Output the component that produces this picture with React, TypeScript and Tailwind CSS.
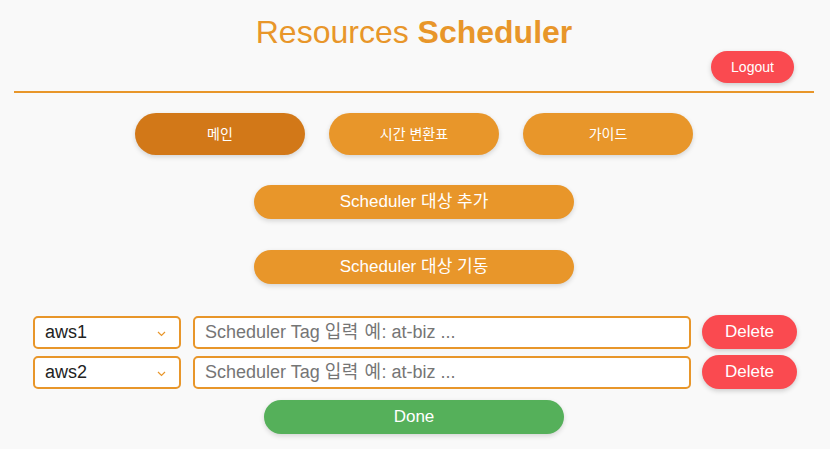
const sans = "font-['Liberation_Sans','Noto_Sans_CJK_KR',sans-serif]";

function Row({ value }: { value: string }) {
  return (
    <div className="ml-[2px] flex items-center">
      <div className="relative w-[148px] h-[33px] rounded-[5px] border-2 border-[#e8962a] bg-white flex items-center pl-[10px]">
        <span className="text-[18px] text-[#222]">{value}</span>
        <svg
          className="absolute right-[13px] top-[13px]"
          width="9"
          height="6"
          viewBox="0 0 9 6"
          fill="none"
        >
          <path d="M1 1l3.5 3.5L8 1" stroke="#e8962a" strokeWidth="1.2" />
        </svg>
      </div>
      <div className="ml-[12px] w-[498px] h-[33px] rounded-[5px] border-2 border-[#e8962a] bg-white flex items-center pl-[10px]">
        <span className="text-[18px] text-[#757575]">
          Scheduler Tag <span className="tracking-[0.5px]">입력 예</span>: at-biz ...
        </span>
      </div>
      <button className="ml-[11px] w-[95px] h-[34px] rounded-full bg-[#fa4a50] text-white text-[17px] shadow-[0_2px_5px_rgba(0,0,0,0.18)]">
        Delete
      </button>
    </div>
  );
}

export default function App() {
  return (
    <div className={`min-h-[449px] bg-[#f9f9f9] ${sans}`}>
      <div className="w-[828px]">
        <div className="w-[800px] mx-auto pt-[14px]">
          {/* Header */}
          <h1 className="text-center text-[32px] leading-[37px] text-[#e8962a]">
            Resources <span className="font-bold">Scheduler</span>
          </h1>
          <div className="flex justify-end pr-[20px]">
            <button className="w-[83px] h-[32px] rounded-full bg-[#fa4a50] text-white text-[14px] shadow-[0_2px_5px_rgba(0,0,0,0.18)]">
              Logout
            </button>
          </div>
          <div className="mt-[8px] h-[2px] bg-[#e8962a]" />

          {/* Nav */}
          <div className="mt-[20px] flex justify-center gap-[24px]">
            <button className="w-[170px] h-[42px] rounded-full bg-[#d27818] text-white text-[14px] shadow-[0_2px_5px_rgba(0,0,0,0.15)]">
              메인
            </button>
            <button className="w-[170px] h-[42px] rounded-full bg-[#e8962a] text-white text-[14px] shadow-[0_2px_5px_rgba(0,0,0,0.15)]">
              시간 변환표
            </button>
            <button className="w-[170px] h-[42px] rounded-full bg-[#e8962a] text-white text-[14px] shadow-[0_2px_5px_rgba(0,0,0,0.15)]">
              가이드
            </button>
          </div>

          {/* Actions */}
          <div className="mt-[30px] flex flex-col items-center gap-[31px]">
            <button className="w-[320px] h-[34px] rounded-full bg-[#e8962a] text-white text-[17px] shadow-[0_2px_5px_rgba(0,0,0,0.15)]">
              Scheduler 대상 추가
            </button>
            <button className="w-[320px] h-[34px] rounded-full bg-[#e8962a] text-white text-[17px] shadow-[0_2px_5px_rgba(0,0,0,0.15)]">
              Scheduler 대상 기동
            </button>
          </div>

          {/* Rows */}
          <div className="mt-[31px] flex flex-col items-center gap-[6px]">
            <Row value="aws1" />
            <Row value="aws2" />
          </div>

          <div className="mt-[11px] flex justify-center">
            <button className="w-[300px] h-[34px] rounded-full bg-[#55b05a] text-white text-[17px] shadow-[0_2px_5px_rgba(0,0,0,0.15)]">
              Done
            </button>
          </div>
        </div>
      </div>
    </div>
  );
}
